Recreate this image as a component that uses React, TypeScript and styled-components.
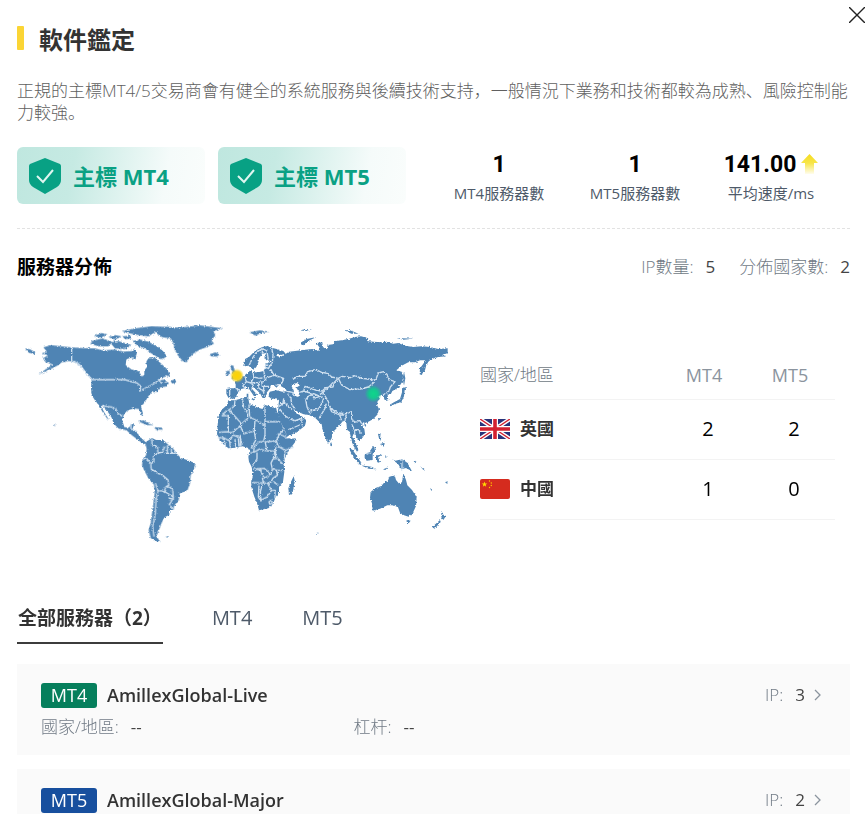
import React, { useState } from "react";
import styled, { createGlobalStyle } from "styled-components";

const GlobalStyle = createGlobalStyle`
  *, *::before, *::after { box-sizing: border-box; }
  body { margin: 0; background: #fff; }
  button { font: inherit; color: inherit; background: none; border: 0; padding: 0; cursor: pointer; }
  h1, h2, h3, p, dl, dd, ul { margin: 0; padding: 0; }
`;

const Dialog = styled.main`
  position: relative;
  height: 100vh;
  overflow-y: auto;
  scrollbar-width: none;
  padding: 24px 15px 0 17px;
  font-family: "Open Sans", "Noto Sans CJK SC", sans-serif;
  font-size: 17px;
  line-height: 22px;
  color: #333;
  background: #fff;
`;

const CloseButton = styled.button`
  position: absolute;
  top: 7px;
  right: 0;
  width: 16px;
  height: 16px;
  svg { display: block; }
`;

const Title = styled.h1`
  display: flex;
  align-items: center;
  gap: 15px;
  height: 32px;
  font-size: 24px;
  line-height: 32px;
  font-weight: 700;
  &::before {
    content: "";
    width: 7px;
    height: 24px;
    margin-bottom: 4px;
    border-radius: 1px;
    background: #fbd535;
  }
`;

const Description = styled.p`
  margin-top: 24px;
  color: #606060;
  font-weight: 300;
`;

const Summary = styled.section`
  display: flex;
  gap: 13px;
  margin-top: 23px;
  padding-bottom: 24px;
  border-bottom: 1px dashed #e2e2e2;
`;

const Badge = styled.div`
  display: flex;
  align-items: center;
  gap: 12px;
  flex: 0 0 188px;
  height: 57px;
  padding-left: 12px;
  border-radius: 6px;
  background: linear-gradient(100deg, #bfe7df 0%, #c6eae3 30%, #f5fbfa 78%, #fafdfc 100%);
  color: #0aa184;
  font-size: 22px;
  font-weight: 700;
  white-space: nowrap;
`;

const Stats = styled.dl`
  display: grid;
  grid-template-columns: repeat(3, 1fr);
  flex: 1;
  padding: 0 11px 0 12px;
`;

const Stat = styled.div`
  display: flex;
  flex-direction: column-reverse;
  justify-content: flex-end;
  align-items: center;
  dt { color: #4e5a69; font-size: 15px; line-height: 22px; white-space: nowrap; }
  dd {
    display: flex;
    align-items: center;
    gap: 5px;
    height: 35px;
    color: #000;
    font-family: Roboto, sans-serif;
    font-size: 23px;
    font-weight: 700;
  }
`;

const SectionHead = styled.header`
  display: flex;
  justify-content: space-between;
  align-items: center;
  margin-top: 25px;
  height: 26px;
`;

const SectionTitle = styled.h2`
  color: #000;
  font-size: 19px;
  line-height: 26px;
  font-weight: 700;
`;

const Totals = styled.div`
  display: flex;
  gap: 24px;
`;

const Pair = styled.span`
  display: inline-flex;
  gap: 12px;
  color: #707a85;
  font-weight: 300;
  b { color: #444; font-weight: 400; }
`;

const Distribution = styled.section`
  display: grid;
  grid-template-columns: 436fr 355fr;
  gap: 27px;
  align-items: start;
  margin-top: 35px;
  padding-right: 15px;
  svg { display: block; }
`;

const CountryTable = styled.table`
  width: 100%;
  margin-top: 37px;
  border-collapse: collapse;
  table-layout: fixed;
  th, td { padding: 0; border-bottom: 1px solid #f3f3f3; text-align: center; }
  th:not(:first-child) { width: 86px; }
  thead th { height: 47px; padding-right: 4px; color: #8b949e; font-size: 18px; font-weight: 400; }
  thead th:first-child { text-align: left; color: #707a85; font-size: 17px; font-weight: 300; }
  tbody tr { height: 60px; }
  tbody td { padding-left: 4px; color: #000; font-size: 20px; }
`;

const Country = styled.span`
  display: flex;
  align-items: center;
  gap: 10px;
  font-weight: 600;
`;

const Tabs = styled.div`
  display: flex;
  align-items: stretch;
  gap: 48px;
  margin-top: 42px;
`;

const Tab = styled.button<{ $active: boolean }>`
  height: 52px;
  padding: 2px 1px 0;
  border-bottom: 2px solid ${(p) => (p.$active ? "#3c3c3c" : "transparent")};
  color: ${(p) => (p.$active ? "#333" : "#4e5a69")};
  font-size: ${(p) => (p.$active ? 19 : 20)}px;
  font-weight: ${(p) => (p.$active ? 700 : 400)};
`;

const ServerList = styled.ul`
  display: grid;
  gap: 14px;
  margin-top: 20px;
  list-style: none;
`;

const ServerCard = styled.li`
  padding: 18px 28px 15px 24px;
  background: #fafafa;
`;

const ServerHead = styled.div`
  display: flex;
  align-items: center;
  height: 26px;
`;

const Platform = styled.span<{ $color: string }>`
  width: 56px;
  height: 25px;
  border-radius: 3px;
  background: ${(p) => p.$color};
  color: #fff;
  font-size: 18px;
  line-height: 25px;
  text-align: center;
`;

const ServerName = styled.h3`
  flex: 1;
  margin-left: 10px;
  font-size: 18px;
  font-weight: 600;
`;

const IpButton = styled.button`
  display: flex;
  align-items: center;
  gap: 9px;
`;

const ServerMeta = styled.div`
  display: grid;
  grid-template-columns: 40% 60%;
  margin-top: 8px;
  height: 24px;
`;

const Shield = () => (
  <svg width="32" height="36" viewBox="0 0 32 36" aria-hidden="true">
    <path d="M16 0 31 6Q32 7 32 8V22Q32 26 28 29L16 36 4 29Q0 26 0 22V8Q0 7 1 6Z" fill="#08a184" />
    <path d="m8 18 6 6 10-12" fill="none" stroke="#dff6f0" strokeWidth="2" />
  </svg>
);

const UpArrow = () => (
  <svg width="17" height="21" viewBox="0 0 17 21" aria-hidden="true">
    <defs>
      <linearGradient id="rise" x1="0" y1="0" x2="0" y2="1">
        <stop offset="0" stopColor="#f5dc20" />
        <stop offset="0.45" stopColor="#f7e548" />
        <stop offset="1" stopColor="#fffdee" />
      </linearGradient>
    </defs>
    <path d="M8.5 0 17 9H13V20H4V9H0Z" fill="url(#rise)" />
  </svg>
);

const Chevron = () => (
  <svg width="8" height="12" viewBox="0 0 8 12" fill="none" stroke="#8b949e" strokeWidth="1.3" aria-hidden="true">
    <path d="m1 1 5 5-5 5" />
  </svg>
);

const FlagUK = () => (
  <svg width="30" height="20" viewBox="0 0 30 20" aria-hidden="true">
    <path fill="#29337a" d="M0 0h30v20H0z" />
    <path d="m0 0 30 20M30 0 0 20" stroke="#fff" strokeWidth="4" />
    <path d="m0 0 12 8M30 20l-12-8M30 0 18 8M0 20l12-8" stroke="#d32030" strokeWidth="1.4" />
    <path d="M15 0v20M0 10h30" stroke="#fff" strokeWidth="6" />
    <path d="M15 0v20M0 10h30" stroke="#d32030" strokeWidth="3.6" />
  </svg>
);

const FlagCN = () => (
  <svg width="30" height="20" viewBox="0 0 30 20" aria-hidden="true">
    <rect width="30" height="20" rx="2" fill="#d52b1e" />
    <path fill="#ffde00" d="m4.5 2.5.7 2h2.1L5.600 5.800l.6 2-1.700-1.200-1.700 1.200.6-2-1.700-1.300h2.100z" />
    <g fill="#ffc400">
      <circle cx="9.500" cy="2" r=".7" />
      <circle cx="11.300" cy="4" r=".7" />
      <circle cx="11.300" cy="6.500" r=".7" />
      <circle cx="9.500" cy="8.500" r=".7" />
    </g>
  </svg>
);

const WorldMap = () => (
  <svg viewBox="0 0 1308 705" width="100%" role="img" aria-label="服務器分佈">
    <defs>
      <filter id="coast" x="-2%" y="-2%" width="104%" height="104%">
        <feTurbulence type="fractalNoise" baseFrequency="0.2" numOctaves="2" seed="4" />
        <feDisplacementMap in="SourceGraphic" scale="9" xChannelSelector="R" yChannelSelector="G" />
      </filter>
      <radialGradient id="uk">
        <stop offset="0" stopColor="#ffd400" />
        <stop offset="0.6" stopColor="#f5d21c" />
        <stop offset="1" stopColor="#f5d21c" stopOpacity="0" />
      </radialGradient>
      <radialGradient id="cn">
        <stop offset="0" stopColor="#0fd68b" />
        <stop offset="0.5" stopColor="#14c98f" />
        <stop offset="1" stopColor="#14c98f" stopOpacity="0" />
      </radialGradient>
    </defs>
    <g fill="#4f84b4" filter="url(#coast)">
      {/* North America */}
      <g transform="translate(-6 0)">
        <path d="M85 97 108 90 140 94 170 97 205 99 240 100 262 106 300 104 325 110 350 108 360 100 366 118 350 126 334 134 332 150 350 164 372 168 380 184 388 180 388 166 396 156 394 140 400 130 420 128 432 140 457 163 465 182 440 188 425 198 445 194 462 204 455 214 435 218 425 230 410 232 398 246 390 262 378 274 384 296 380 302 372 282 355 280 335 288 326 300 322 316 328 336 342 338 350 326 358 326 352 344 366 350 375 368 392 383 386 387 368 374 350 360 335 346 310 340 296 326 290 308 278 290 264 272 258 274 270 296 282 314 276 310 262 290 250 268 240 256 230 240 228 220 230 196 222 182 210 168 196 152 176 140 160 138 140 142 130 150 104 164 70 178 100 158 112 148 90 140 84 130 100 120 78 116 96 110Z" />
        <path d="M30 100 45 103 62 112 58 118 40 112ZM230 78 262 70 290 80 280 94 250 94 226 86ZM285 82 310 78 330 84 350 90 330 102 300 100ZM236 64 260 54 278 58 258 68ZM280 66 300 60 320 64 300 74ZM322 64 346 62 350 70 330 72ZM320 48 360 40 410 34 470 36 450 44 424 50 400 64 370 60 340 54ZM352 78 376 74 400 80 430 96 445 110 456 124 440 134 420 122 404 112 390 100 370 94ZM368 318 386 316 402 326 416 330 396 330ZM416 336 440 338 444 344 424 344ZM466 198 480 192 484 202 472 206ZM116 328 122 330 120 334ZM350 120 364 122 362 132 350 130Z" />
      </g>
      {/* Greenland, Iceland, Svalbard, British Isles */}
      <g transform="translate(399 0)">
        <path d="M20 45 50 36 90 38 150 31 218 40 190 48 196 62 184 76 192 86 170 96 150 104 130 116 118 128 110 142 98 138 84 122 74 104 70 84 62 70 36 66 20 56ZM178 118 196 112 210 118 200 125 184 124ZM298 52 330 46 356 50 330 56 316 62ZM240 150 250 152 254 166 264 178 270 188 256 192 244 192 252 178 244 164ZM227 170 238 166 240 178 228 182Z" />
      </g>
      {/* South America */}
      <g transform="translate(339 345)">
        <path d="M45 38 60 28 66 24 78 30 100 30 112 42 128 54 138 68 152 84 172 90 192 98 197 108 190 122 182 136 180 160 172 182 150 190 146 210 132 228 130 240 118 240 118 254 104 262 96 276 90 292 84 306 78 318 90 334 76 334 62 324 56 300 62 280 66 250 70 220 74 190 72 164 56 146 44 124 36 106 38 88 48 76 50 56ZM107 320 118 319 112 324ZM22 18 34 24 48 38 42 42 28 30Z" />
      </g>
      {/* Eurasia, Africa, Madagascar */}
      <g transform="translate(564 60)">
        <path d="M114 86 120 72 132 66 146 52 156 44 172 36 188 33 200 38 215 42 235 48 242 56 228 60 218 56 214 62 226 66 240 58 252 50 270 48 300 44 322 42 340 48 344 38 334 24 352 22 354 36 366 44 368 30 384 28 390 18 410 16 430 12 450 6 468 4 490 10 486 18 505 20 530 22 545 20 565 26 580 24 600 32 625 36 650 34 675 36 700 42 728 40 728 56 712 58 724 64 700 66 690 68 672 78 664 90 660 106 650 120 644 118 645 100 655 86 660 76 645 76 630 82 610 82 590 92 574 106 590 110 594 122 592 140 580 158 562 168 558 176 548 180 550 196 540 198 536 186 528 180 520 184 525 192 518 198 516 210 522 222 518 238 505 252 490 260 480 264 474 262 470 268 478 282 480 296 470 312 460 318 452 302 446 296 442 306 452 322 460 345 456 350 444 330 438 310 434 290 426 284 424 262 414 258 406 268 390 285 384 290 380 310 370 326 362 310 354 290 350 268 344 262 330 248 312 240 296 238 278 230 265 222 272 234 285 240 296 248 304 256 300 272 280 288 258 300 246 304 236 280 224 256 217 238 220 220 222 196 214 190 200 192 190 184 194 170 214 166 232 170 248 168 236 158 222 150 214 158 206 150 198 150 192 164 186 172 180 190 172 188 166 176 156 166 144 156 138 158 150 172 156 178 150 188 142 176 130 158 118 160 108 162 100 170 96 184 84 192 70 188 64 176 64 162 78 160 92 160 92 148 88 140 104 132 116 124 124 116 132 112 134 104 140 106 142 112 160 112 176 108 182 96 180 86 196 82 200 78 184 76 178 66 184 54 172 56 162 70 160 82 154 96 146 104 138 98 130 92 120 94Z" />
        <path d="M70 196 90 196 112 190 130 188 132 202 134 208 160 218 172 222 180 210 214 220 216 232 226 258 236 282 246 302 252 312 272 310 270 322 252 346 240 370 236 388 238 410 234 440 222 456 222 472 212 486 204 506 190 520 162 526 156 505 148 485 140 460 138 440 144 420 140 396 132 380 130 366 134 348 128 338 112 334 92 338 72 340 60 334 46 316 36 298 38 270 40 246 50 224 66 210ZM266 424 270 440 262 476 252 480 250 460 258 440ZM376 322 382 328 380 334 376 332ZM125 176 130 176 130 188 125 186ZM138 192 150 191 148 197ZM224 198 232 196 226 202Z" />
        <path fill="#fff" d="M258 150 276 144 286 150 274 158 284 174 280 186 268 182 266 166Z" />
      </g>
      {/* Arctic islands, Japan, Sakhalin */}
      <g transform="translate(849 0)">
        <path d="M0 84 20 72 50 66 24 78 8 92ZM134 46 150 46 176 56 154 56ZM290 69 340 71 310 74ZM0 46 20 42 36 44 14 48ZM312 170 316 190 312 212 308 190ZM268 270 282 262 300 252 306 232 306 220 320 216 314 226 312 244 304 262 286 266 272 274ZM254 236 262 250 258 258 252 246ZM234 308 240 310 236 318ZM192 328 200 328 196 336Z" />
      </g>
      {/* South-East Asia, Australia, New Zealand */}
      <g transform="translate(849 345)">
        <path d="M212 186 226 174 244 168 254 156 264 152 268 140 284 136 288 150 298 162 306 156 310 130 318 150 322 166 336 180 350 202 348 228 338 250 326 260 312 256 300 248 294 232 280 226 262 226 240 236 218 242 216 220 210 204ZM320 270 332 272 326 280 320 276ZM424 242 430 254 438 258 430 270 424 262ZM420 270 422 276 404 296 396 292ZM148 54 158 60 172 80 184 98 180 104 164 86 152 66ZM182 106 214 110 230 118 206 116ZM194 74 208 66 220 48 228 58 218 72 218 90 200 92 194 84ZM228 76 246 74 234 82 240 96 234 98 228 90ZM286 92 306 88 322 98 336 124 318 114 304 118 294 102 276 88ZM234 12 242 10 240 26 246 32 238 30ZM240 42 254 38 252 50 244 46ZM256 74 260 82 256 84ZM340 96 350 92 344 100ZM360 108 376 122 370 120ZM390 174 398 180 394 182ZM436 156 444 154 438 162ZM50 308 56 308 54 312ZM250 118 264 112 254 122Z" />
      </g>
    </g>
    <g fill="none" stroke="#cfe0f0" strokeWidth="4" strokeLinejoin="round" filter="url(#coast)">
      {/* North American borders */}
      <path transform="translate(-6 0)" d="M170 97V138L186 142 200 156 214 176 232 194H330L350 200 366 204 378 214 374 228 390 220 406 212 420 204 432 194 440 206M262 272 290 276 304 284 310 296 322 304M348 326 348 342 366 350" />
      {/* South American borders */}
      <path transform="translate(339 345)" d="M66 26 66 44 82 50 84 70 70 78 72 96 64 100M40 82 54 90 62 100 64 118 76 124 82 130 96 134 114 150 116 166 108 170 102 184 84 182 76 160M84 182 78 210 76 250 68 290 72 320M82 70 98 66 104 48M112 46 112 70 124 70 124 56M104 70 138 70M102 184 116 192 128 200 130 208 116 204M116 168 128 180 130 204 118 224 130 238" />
      {/* Eurasian borders */}
      <path transform="translate(564 60)" d="M262 134 278 124 300 124 308 110 332 104 350 112 370 116 380 126 400 130 388 142 384 156 362 158 352 168 334 166 318 160 300 154 296 168 284 172M400 130 412 124 436 128 450 122 470 130 490 132 508 136 514 130 520 114 536 110 546 118 552 134 570 140 556 156 552 168 534 180M400 130 410 150 434 164 466 162 490 156 508 142M384 142 368 160 354 172 362 186 370 200 376 220 400 234 424 236 440 230M354 172 340 182 326 176 310 184 302 194M296 168 316 174 328 190 344 184 352 188M302 194 306 216 316 238M316 228 340 222 350 206 356 190M342 250 360 220 364 206M376 222 380 230 404 240 420 240M404 240 410 258M424 238 420 258M440 232 440 252 450 262 464 256 470 266M440 268 448 284 462 284 466 296M448 284 450 302M248 176 258 190 260 208 270 222M222 206 240 204 262 224M236 190 234 206 222 214M224 222 242 244 268 258 290 250 292 272M250 284 270 276 284 270M244 168 262 172 268 180M190 100 198 104 206 120 236 130 230 148 212 150M176 108 180 126 164 130 146 126 144 110M120 124 124 140 138 144 146 152M146 126 138 144 160 142 176 140 186 128 206 122M170 140 172 154 192 154M160 142 162 160 180 170M176 158 176 176M124 140 114 152 120 160M92 160 106 166M74 162 74 190M132 92 142 70 152 54 172 40 186 48 190 74M172 40 172 56M200 38 204 60 202 82 190 100 178 96M180 90 194 92" />
      {/* African borders */}
      <path transform="translate(564 60)" d="M90 196 88 214 72 224 52 238M50 242 70 242 70 290 42 292M72 224 106 262 106 272 82 292 70 292M112 190 116 216 128 234 128 250 106 270M132 208 134 246 150 254 180 270 180 216M180 260 222 260M150 254 148 288 116 296 106 272M180 270 180 300 176 318 160 322 148 334 146 350M148 288 152 316 138 340M234 284 222 300 214 318 182 320M214 318 220 334 240 346 266 336M218 296 234 302 248 310M38 308 56 308 62 336M56 308 74 318 76 338M74 318 84 300 106 308 112 332M90 312 92 336M100 310 102 334M106 300 106 334M214 334 210 348 186 348 164 342 146 352 136 354M186 348 180 318M210 348 204 372 198 384 202 402 198 418 178 400 144 402M156 352 156 372 142 390M240 346 238 372M204 372 218 370 236 390M212 348 212 368M202 402 216 406 234 406M198 418 184 426 172 430 176 444 140 442M144 402 166 404 172 420 180 430M176 444 196 444 204 430 218 420 214 406M162 448 160 486 168 498 166 470 172 448M168 496 186 486 200 466 188 446M200 466 210 466 210 490M204 440 220 450M192 500 200 496 202 504 194 508Z" />
      <path transform="translate(849 345)" d="M306 88V118M198 72 214 66" />
    </g>
    <circle cx="660" cy="182" r="21" fill="url(#uk)" />
    <circle cx="1069" cy="236" r="26" fill="url(#cn)" />
  </svg>
);

const countries = [
  { name: "英國", flag: <FlagUK />, mt4: 2, mt5: 2 },
  { name: "中國", flag: <FlagCN />, mt4: 1, mt5: 0 },
];

type Server = {
  platform: string;
  color: string;
  name: string;
  ip: number;
  meta?: { country: string; leverage: string };
};

const servers: Server[] = [
  {
    platform: "MT4",
    color: "#067f5c",
    name: "AmillexGlobal-Live",
    ip: 3,
    meta: { country: "--", leverage: "--" },
  },
  { platform: "MT5", color: "#174f9e", name: "AmillexGlobal-Major", ip: 2 },
];

const tabs = ["全部服務器（2）", "MT4", "MT5"];

export default function App() {
  const [active, setActive] = useState(0);
  const shown = active === 0 ? servers : servers.filter((s) => s.platform === tabs[active]);

  return (
    <Dialog>
      <GlobalStyle />
      <CloseButton aria-label="關閉">
        <svg width="16" height="16" viewBox="0 0 16 16" stroke="#222" strokeWidth="1.4" aria-hidden="true">
          <path d="m0 0 16 16M16 0 0 16" />
        </svg>
      </CloseButton>
      <Title>軟件鑑定</Title>
      <Description>
        正規的主標MT4/5交易商會有健全的系統服務與後續技術支持，一般情況下業務和技術都較為成熟、風險控制能力較強。
      </Description>
      <Summary>
        <Badge><Shield />主標 MT4</Badge>
        <Badge><Shield />主標 MT5</Badge>
        <Stats>
          <Stat><dt>MT4服務器數</dt><dd>1</dd></Stat>
          <Stat><dt>MT5服務器數</dt><dd>1</dd></Stat>
          <Stat><dt>平均速度/ms</dt><dd>141.00<UpArrow /></dd></Stat>
        </Stats>
      </Summary>
      <SectionHead>
        <SectionTitle>服務器分佈</SectionTitle>
        <Totals>
          <Pair>IP數量: <b>5</b></Pair>
          <Pair>分佈國家數: <b>2</b></Pair>
        </Totals>
      </SectionHead>
      <Distribution>
        <WorldMap />
        <CountryTable>
          <thead>
            <tr><th scope="col">國家/地區</th><th scope="col">MT4</th><th scope="col">MT5</th></tr>
          </thead>
          <tbody>
            {countries.map((c) => (
              <tr key={c.name}>
                <th scope="row"><Country>{c.flag}{c.name}</Country></th>
                <td>{c.mt4}</td>
                <td>{c.mt5}</td>
              </tr>
            ))}
          </tbody>
        </CountryTable>
      </Distribution>
      <Tabs role="tablist">
        {tabs.map((label, i) => (
          <Tab key={label} role="tab" aria-selected={active === i} $active={active === i} onClick={() => setActive(i)}>
            {label}
          </Tab>
        ))}
      </Tabs>
      <ServerList>
        {shown.map((s) => (
          <ServerCard key={s.name}>
            <ServerHead>
              <Platform $color={s.color}>{s.platform}</Platform>
              <ServerName>{s.name}</ServerName>
              <IpButton><Pair>IP: <b>{s.ip}</b></Pair><Chevron /></IpButton>
            </ServerHead>
            {s.meta && (
              <ServerMeta>
                <Pair>國家/地區: <b>{s.meta.country}</b></Pair>
                <Pair>杠杆: <b>{s.meta.leverage}</b></Pair>
              </ServerMeta>
            )}
          </ServerCard>
        ))}
      </ServerList>
    </Dialog>
  );
}
